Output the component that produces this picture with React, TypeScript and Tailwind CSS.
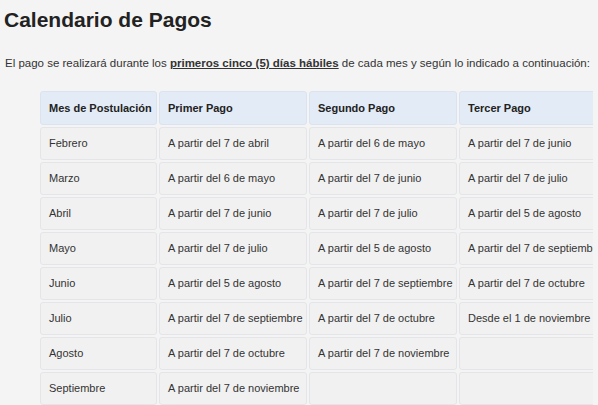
import React from 'react';

const rows: [string, string, string, string][] = [
  ['Febrero', 'A partir del 7 de abril', 'A partir del 6 de mayo', 'A partir del 7 de junio'],
  ['Marzo', 'A partir del 6 de mayo', 'A partir del 7 de junio', 'A partir del 7 de julio'],
  ['Abril', 'A partir del 7 de junio', 'A partir del 7 de julio', 'A partir del 5 de agosto'],
  ['Mayo', 'A partir del 7 de julio', 'A partir del 5 de agosto', 'A partir del 7 de septiembre'],
  ['Junio', 'A partir del 5 de agosto', 'A partir del 7 de septiembre', 'A partir del 7 de octubre'],
  ['Julio', 'A partir del 7 de septiembre', 'A partir del 7 de octubre', 'Desde el 1 de noviembre'],
  ['Agosto', 'A partir del 7 de octubre', 'A partir del 7 de noviembre', ''],
  ['Septiembre', 'A partir del 7 de noviembre', '', ''],
];

const headers = ['Mes de Postulación', 'Primer Pago', 'Segundo Pago', 'Tercer Pago'];

export default function App() {
  return (
    <div className="min-h-[405px] w-[598px] overflow-hidden bg-[#f4f4f4] text-[#333] font-['Liberation_Sans',Arial,sans-serif]">
      <h1 className="pl-[4px] pt-[6px] text-[21px] font-bold leading-[28px] text-[#222]">Calendario de Pagos</h1>
      <p className="mt-[22px] pl-[5px] text-[11.5px] leading-[14px] text-[#333] whitespace-nowrap">
        El pago se realizará durante los <span className="font-bold underline">primeros cinco (5) días hábiles</span> de cada mes y según lo indicado a continuación:
      </p>
      <div className="ml-[39px] mt-[20px] w-[554px] overflow-hidden">
        <div className="grid grid-cols-[117px_148px_148px_148px] gap-[2px] p-[1px] text-[11px]">
          {headers.map(h => (
            <div key={h} className="flex h-[34px] items-center whitespace-nowrap rounded-[3px] border border-[#dae3ef] bg-[#e3ebf6] px-[8px] font-bold text-[#222]">{h}</div>
          ))}
          {rows.map(r => r.map((c, i) => (
            <div key={r[0] + i} className="flex h-[33px] items-center whitespace-nowrap rounded-[3px] border border-[#e3e5e8] bg-[#f1f1f1] px-[8px]">{c}</div>
          )))}
        </div>
      </div>
    </div>
  );
}
